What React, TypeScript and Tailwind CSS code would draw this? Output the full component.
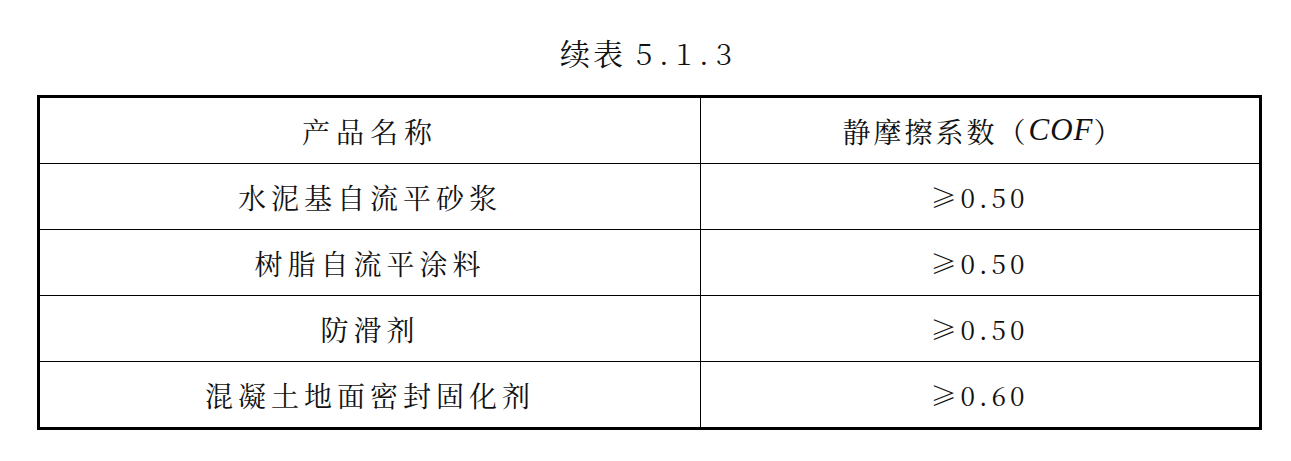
const rows = [
  { name: "水泥基自流平砂浆", value: "0.50" },
  { name: "树脂自流平涂料", value: "0.50" },
  { name: "防滑剂", value: "0.50" },
  { name: "混凝土地面密封固化剂", value: "0.60" },
];

const font = {
  fontFamily:
    '"Noto Serif CJK SC", "Liberation Serif", "Noto Sans CJK SC", serif',
};

export default function App() {
  return (
    <div className="w-[1291px] h-[461px] bg-white text-[#111]" style={font}>
      <div className="ml-[37px] w-[1225px] h-[95px] flex items-center justify-center pt-[10px]">
        <span className="text-[30px] tracking-[3px]">续表</span>
        <span className="ml-[10px] text-[30px] tracking-[7px] font-light">5.1.3</span>
      </div>

      <div className="ml-[37px] w-[1225px] border-[3px] border-black">
        <div className="grid grid-cols-[661px_557px] h-[65px]">
          <div className="flex items-center justify-center text-[28px] tracking-[6px] border-r border-black">
            产品名称
          </div>
          <div className="flex items-center justify-center text-[28px] tracking-[3px] pl-[8px]">
            静摩擦系数（
            <i
              className="tracking-[1px] text-[31px]"
              style={{ fontFamily: '"Liberation Serif", serif' }}
            >
              COF
            </i>
            ）
          </div>
        </div>
        {rows.map((r) => (
          <div
            key={r.name}
            className="grid grid-cols-[661px_557px] h-[66px] border-t border-black"
          >
            <div className="flex items-center justify-center text-[28px] tracking-[5px] border-r border-black">
              {r.name}
            </div>
            <div className="flex items-center justify-center text-[26px] tracking-[4px]">
              ≥{r.value}
            </div>
          </div>
        ))}
      </div>
    </div>
  );
}
